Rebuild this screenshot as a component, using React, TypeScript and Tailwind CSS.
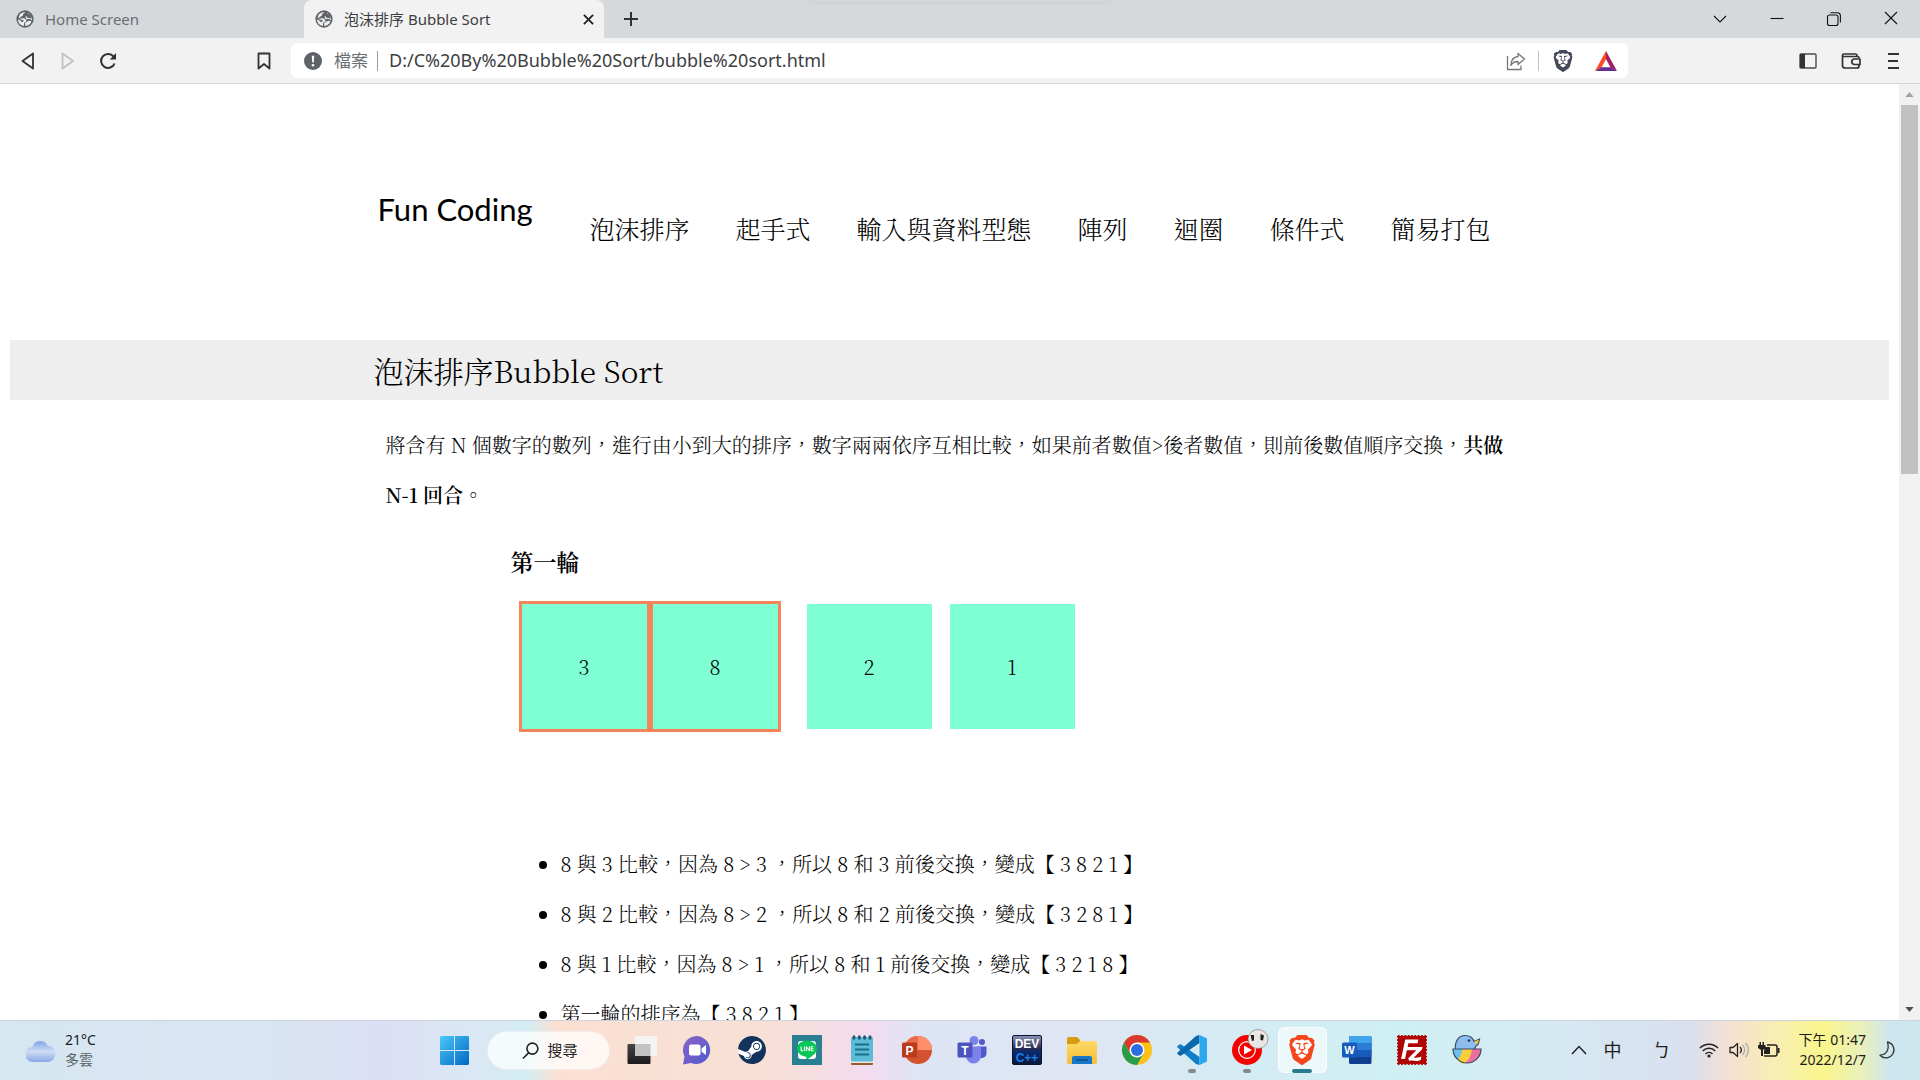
import type { ReactNode } from 'react';
import { SiBrave, SiFilezilla, SiLine, SiSteam } from 'react-icons/si';

const SERIF = "font-['Noto_Serif_CJK_TC','Noto_Sans_CJK_TC',serif]";
const SANS = "font-['Noto_Sans','Noto_Sans_CJK_TC',sans-serif]";

const navItems = ['泡沫排序', '起手式', '輸入與資料型態', '陣列', '迴圈', '條件式', '簡易打包'];

const steps = [
  '8 與 3 比較，因為 8 > 3 ，所以 8 和 3 前後交換，變成【 3 8 2 1 】',
  '8 與 2 比較，因為 8 > 2 ，所以 8 和 2 前後交換，變成【 3 2 8 1 】',
  '8 與 1 比較，因為 8 > 1 ，所以 8 和 1 前後交換，變成【 3 2 1 8 】',
  '第一輪的排序為【 3 8 2 1 】',
];

function Globe() {
  return (
    <svg viewBox="0 0 20 20" className="size-[18px] shrink-0" aria-hidden="true">
      <circle cx="10" cy="10" r="9.6" fill="#5f6368" />
      <path
        d="M10.600 2.200A8 8 0 0 0 4 5L3 8.500 5.500 9.500 9 9.200 11.600 11.200 11.200 13.400 9 14 8.800 17.900A8 8 0 0 1 2.200 10.400L4.500 11.500 6.500 13.500 8.500 12.500 8.200 11 5 10.500 4.500 8 7.500 6.500 8 4.500Z"
        fill="#eceef0"
      />
      <path d="M13.500 3 17.800 8.500 17.800 11.500 14.500 9.800 11.500 10.200 10.500 7.500 12.500 6Z" fill="#eceef0" />
      <path d="M10 14.500 14.500 12 17.200 12.500A8 8 0 0 1 10.500 17.800Z" fill="#eceef0" />
      <path d="M13 3.500A7.500 7.500 0 0 1 17.500 10L14.500 8.500 12.500 8.500 11.800 7Z" fill="#5f6368" />
    </svg>
  );
}

function TabStrip() {
  return (
    <div className="relative flex h-[38px] shrink-0 bg-[#d5d9dc]">
      <div className="absolute left-[810px] top-0 h-px w-[300px] shadow-[0_0_6px_1px_rgba(0,0,0,0.06)]" />
      <div className="flex w-[304px] items-center gap-[11px] pl-4 text-[15px] text-[#6a6e72]">
        <Globe />
        <span>Home Screen</span>
      </div>
      <div className="flex w-[300px] items-center rounded-t-lg bg-[#f2f2f2] pl-[11px] pr-2 text-[15px] text-[#3c4043]">
        <Globe />
        <span className="ml-[11px] flex-1 whitespace-nowrap">泡沫排序 Bubble Sort</span>
        <button aria-label="Close tab" className="grid size-4 place-items-center">
          <svg viewBox="0 0 12 12" className="size-[11px]" stroke="#202124" strokeWidth="2">
            <path d="M1 1 11 11M11 1 1 11" />
          </svg>
        </button>
      </div>
      <button aria-label="New tab" className="grid w-[54px] place-items-center">
        <svg viewBox="0 0 16 16" className="size-4" stroke="#303236" strokeWidth="2">
          <path d="M8 1V15M1 8H15" />
        </svg>
      </button>
      <div className="ml-auto flex pr-px">
        <WindowButton label="Search tabs">
          <path d="M2 5 8 11 14 5" />
        </WindowButton>
        <WindowButton label="Minimize">
          <path d="M1.500 7.500H14.500" />
        </WindowButton>
        <WindowButton label="Restore">
          <rect x="1.500" y="4" width="10.500" height="10.500" rx="2" />
          <path d="M4.500 1.700H11.500A3 3 0 0 1 14.400 4.700V11.500" />
        </WindowButton>
        <WindowButton label="Close">
          <path d="M2 1 14 13M14 1 2 13" />
        </WindowButton>
      </div>
    </div>
  );
}

function WindowButton({ label, children }: { label: string; children: ReactNode }) {
  return (
    <button aria-label={label} className="grid w-[57px] place-items-center">
      <svg viewBox="0 0 16 16" className="size-4" fill="none" stroke="#111" strokeWidth="1.100">
        {children}
      </svg>
    </button>
  );
}

function Toolbar() {
  return (
    <div className="flex h-[46px] shrink-0 items-center border-b border-[#d4d6d8] bg-[#f2f2f2]">
      <div className="flex w-[291px] items-center pl-5 pr-5">
        <button aria-label="Back">
          <svg viewBox="0 0 16 18" className="h-[18px] w-4" fill="none" stroke="#303236" strokeWidth="1.800" strokeLinejoin="round">
            <path d="M13 1.500V16.500L2.500 9Z" />
          </svg>
        </button>
        <button aria-label="Forward" className="ml-6">
          <svg viewBox="0 0 16 18" className="h-[18px] w-4" fill="none" stroke="#bfc1c4" strokeWidth="1.800" strokeLinejoin="round">
            <path d="M2.500 1.500V16.500L13 9Z" />
          </svg>
        </button>
        <button aria-label="Reload" className="ml-[23px]">
          <svg viewBox="0 0 18 18" className="size-[18px]" fill="none" stroke="#303236" strokeWidth="2">
            <path d="M15.600 11.500A7 7 0 1 1 14.600 4.600" />
            <path d="M17 1V7.500H10.800Z" fill="#303236" stroke="none" />
          </svg>
        </button>
        <button aria-label="Bookmark this page" className="ml-auto">
          <svg viewBox="0 0 14 18" className="h-[18px] w-[14px]" fill="none" stroke="#303236" strokeWidth="1.800" strokeLinejoin="round">
            <path d="M1.500 1.500H12.500V16.500L7 12 1.500 16.500Z" />
          </svg>
        </button>
      </div>
      <div className="flex h-[35px] flex-1 items-center rounded-md bg-white pl-[13px] pr-[11px] text-[18px]">
        <svg viewBox="0 0 18 18" className="size-[18px]" aria-hidden="true">
          <circle cx="9" cy="9" r="9" fill="#5f6368" />
          <path d="M7.800 3.800H10.200L9.800 10.500H8.200Z" fill="#fff" />
          <circle cx="9" cy="13.300" r="1.300" fill="#fff" />
        </svg>
        <label htmlFor="address" className="ml-3 text-[17px] text-[#6a6e72]">
          檔案
        </label>
        <div className="ml-[9px] h-5 w-px bg-[#9a9da0]" />
        <input
          id="address"
          type="text"
          defaultValue="D:/C%20By%20Bubble%20Sort/bubble%20sort.html"
          className="ml-[11px] min-w-0 flex-1 bg-transparent text-[#3c4043] outline-none"
        />
        <button aria-label="Share">
          <svg viewBox="0 0 20 20" className="size-5" fill="none" stroke="#74777b" strokeWidth="1.300" strokeLinejoin="round">
            <path d="M1.500 5V18.500H15V14.500" />
            <path d="M12 2.500 18.500 8 12 13.500V10.500C8.500 10.500 6.500 11.500 4.800 14.500 5 9 7.500 6 12 5.500Z" />
          </svg>
        </button>
        <div className="ml-3 h-5 w-px bg-[#bfc1c4]" />
        <button aria-label="Brave Shields" className="ml-[13px]">
          <SiBrave size={22} className="text-[#45475a]" />
        </button>
        <button aria-label="Brave Rewards" className="ml-[21px]">
          <svg viewBox="0 0 22 20" className="h-5 w-[22px]">
            <path d="M11 0 0 20 6.500 16.500 11 8Z" fill="#ff4724" />
            <path d="M11 0 22 20 15.500 16.500 11 8Z" fill="#9e1f63" />
            <path d="M0 20H22L15.500 16.200H6.500Z" fill="#662d91" />
          </svg>
        </button>
      </div>
      <div className="flex w-[292px] items-center justify-end pr-[21px]">
        <button aria-label="Sidebar">
          <svg viewBox="0 0 18 16" className="h-4 w-[18px]">
            <rect x="1" y="1" width="16" height="14" rx="1" fill="none" stroke="#4a4c50" strokeWidth="1.400" />
            <path d="M1 1H6V15H1Z" fill="#303236" />
          </svg>
        </button>
        <button aria-label="Wallet" className="ml-6">
          <svg viewBox="0 0 20 16" className="h-4 w-5" fill="none" stroke="#303236" strokeWidth="1.700" strokeLinejoin="round">
            <path d="M18 5V4.500A2 2 0 0 0 16.500 3.500H1.500V12.500A2.500 2.500 0 0 0 4 15H16A2 2 0 0 0 18 13V12M1.500 3.500V2.500A1.500 1.500 0 0 1 3 1H14.500A1.500 1.500 0 0 1 16 2.500V3.500" />
            <path d="M19 6H13.500A2.500 2.500 0 0 0 13.500 11.500H19Z" />
          </svg>
        </button>
        <button aria-label="Menu" className="ml-[26px]">
          <svg viewBox="0 0 12 16" className="h-4 w-3" stroke="#303236" strokeWidth="1.800">
            <path d="M1 1H12M1 8H11M1 15H12" />
          </svg>
        </button>
      </div>
    </div>
  );
}

function Box({ value, active = false }: { value: number; active?: boolean }) {
  return (
    <div
      className={
        active
          ? 'grid size-[131px] place-items-center border-[3px] border-[#f4845a] bg-[#7fffd4]'
          : 'grid size-[125px] place-items-center bg-[#7fffd4]'
      }
    >
      {value}
    </div>
  );
}

function Page() {
  return (
    <main lang="zh-Hant" className={`min-w-0 flex-1 overflow-hidden px-[10px] text-xl font-light tabular-nums text-black ${SERIF}`}>
      <header className="mx-auto flex h-64 max-w-[1152px] items-start gap-14 pl-1 pt-[98px]">
        <a href="#home" className="mt-[7px] w-[156px] whitespace-nowrap font-['Lato',sans-serif] text-[31px] font-normal leading-10">
          Fun Coding
        </a>
        <nav className="mt-[28px] flex gap-[46px] whitespace-nowrap text-[25px] leading-9">
          {navItems.map((item) => (
            <a key={item} href={`#${item}`}>
              {item}
            </a>
          ))}
        </nav>
      </header>
      <div className="bg-[#eee]">
        <h1 className="mx-auto max-w-[1152px] text-[30px] leading-[60px]">泡沫排序Bubble Sort</h1>
      </div>
      <section className="mx-auto max-w-[1152px] px-3 pt-5">
        <p className="leading-[50px]">
          將含有 N 個數字的數列，進行由小到大的排序，數字兩兩依序互相比較，如果前者數值&gt;後者數值，則前後數值順序交換，
          <b className="font-semibold">共做 N-1 回合</b>。
        </p>
        <div className="pl-[125px] pt-6">
          <h2 className="text-[23px] font-semibold leading-9">第一輪</h2>
          <div className="ml-2 mt-[21px] flex items-center">
            <Box value={3} active />
            <Box value={8} active />
            <div className="ml-[26px] flex gap-[18px]">
              <Box value={2} />
              <Box value={1} />
            </div>
          </div>
          <ul className="mt-[107px] list-disc pl-[50px] leading-[50px]">
            {steps.map((step) => (
              <li key={step}>{step}</li>
            ))}
          </ul>
        </div>
      </section>
    </main>
  );
}

function Scrollbar() {
  return (
    <div className="flex w-[21px] shrink-0 flex-col items-center bg-[#f1f1f1]">
      <button aria-label="Scroll up" className="grid h-[21px] place-items-center">
        <svg viewBox="0 0 10 6" className="h-[5px] w-[9px]" fill="#a3a3a3">
          <path d="M0 6 5 0 10 6Z" />
        </svg>
      </button>
      <div className="h-[369px] w-[17px] bg-[#c1c1c1]" />
      <button aria-label="Scroll down" className="mt-auto grid h-[21px] place-items-center">
        <svg viewBox="0 0 10 6" className="h-[5px] w-[9px]" fill="#505050">
          <path d="M0 0 5 6 10 0Z" />
        </svg>
      </button>
    </div>
  );
}

function TaskButton({ label, children, state }: { label: string; children: ReactNode; state?: 'running' | 'active' }) {
  return (
    <button aria-label={label} className="relative grid h-full w-[55px] place-items-center">
      {state === 'active' && <span className="absolute inset-x-[3px] inset-y-[6px] rounded-md border border-white/70 bg-white/60" />}
      <svg viewBox="0 0 30 30" className="relative size-[30px] overflow-visible font-['Liberation_Sans',sans-serif]">
        {children}
      </svg>
      {state === 'running' && <span className="absolute bottom-[6px] h-1 w-2 rounded-full bg-[#85898d]" />}
      {state === 'active' && <span className="absolute bottom-[6px] h-1 w-5 rounded-full bg-[#2a7d8c]" />}
    </button>
  );
}

function TaskIcons() {
  return (
    <>
      <TaskButton label="Task View">
        <defs>
          <linearGradient id="tvDark" x1="0" y1="0" x2="0" y2="1">
            <stop stopColor="#444" />
            <stop offset="1" stopColor="#1c1c1c" />
          </linearGradient>
        </defs>
        <rect x="0.500" y="9" width="23" height="20" rx="1" fill="url(#tvDark)" />
        <rect x="8" y="1" width="22" height="20" rx="1" fill="#f4f4f4" />
        <rect x="8" y="9" width="15.500" height="12" fill="#c2c2c0" />
      </TaskButton>
      <TaskButton label="Chat">
        <defs>
          <linearGradient id="chat" x1="0" y1="0" x2="1" y2="1">
            <stop stopColor="#8a63c8" />
            <stop offset="1" stopColor="#4f5bd0" />
          </linearGradient>
        </defs>
        <path d="M15 1A14 14 0 1 1 9 28L1 29.500 2.500 21.500A14 14 0 0 1 15 1Z" fill="url(#chat)" />
        <rect x="7" y="9.500" width="11.500" height="11" rx="2" fill="#fff" />
        <path d="M19.500 13.500 24 10V20L19.500 16.800Z" fill="#fff" />
      </TaskButton>
      <TaskButton label="Steam">
        <circle cx="15" cy="15" r="13.600" fill="#fff" />
        <SiSteam x={1} y={1} size={28} color="#12335c" />
      </TaskButton>
      <TaskButton label="LINE">
        <rect width="30" height="30" fill="#2a7f93" />
        <rect x="6" y="6" width="18" height="18" rx="3" fill="#fff" />
        <SiLine x={5} y={5} size={20} color="#06c755" />
      </TaskButton>
      <TaskButton label="Notepad">
        <rect x="4" y="26" width="22" height="4" rx="1" fill="#9a5b2c" />
        <rect x="4" y="25" width="22" height="3" fill="#e8e8e8" />
        <rect x="4" y="2" width="22" height="24.500" rx="1.500" fill="#5bbcd8" />
        <g fill="#1d5a70">
          <ellipse cx="7" cy="2.500" rx="1.500" ry="2.300" />
          <ellipse cx="12.300" cy="2.500" rx="1.500" ry="2.300" />
          <ellipse cx="17.600" cy="2.500" rx="1.500" ry="2.300" />
          <ellipse cx="23" cy="2.500" rx="1.500" ry="2.300" />
        </g>
        <path d="M8 9.500H22M8 14.500H22M8 19.500H22" stroke="#1c6f8c" strokeWidth="1.800" />
      </TaskButton>
      <TaskButton label="PowerPoint">
        <circle cx="16" cy="15" r="14" fill="#d35230" />
        <path d="M16 1V15H30A14 14 0 0 0 16 1Z" fill="#ff8f6b" />
        <path d="M16 1A14 14 0 0 0 2 15H16Z" fill="#ed6c47" />
        <rect x="0" y="7.500" width="15" height="15" rx="1.500" fill="#b93a1c" />
        <text x="7.500" y="19.500" textAnchor="middle" fontSize="12" fontWeight="700" fill="#fff">P</text>
      </TaskButton>
      <TaskButton label="Teams">
        <circle cx="17" cy="5.500" r="4.500" fill="#7b83eb" />
        <circle cx="25" cy="7" r="3" fill="#5059c9" />
        <path d="M20 11.500H29.500V19A5 5 0 0 1 20 20Z" fill="#5059c9" />
        <path d="M9 11.500H24V21A7.500 7.500 0 0 1 9 21Z" fill="#7b83eb" />
        <rect x="0.500" y="7.500" width="15" height="15" rx="1.500" fill="#4b53bc" />
        <text x="8" y="19.500" textAnchor="middle" fontSize="12" fontWeight="700" fill="#fff">T</text>
      </TaskButton>
      <TaskButton label="Dev-C++">
        <defs>
          <linearGradient id="dev" x1="0" y1="0" x2="0" y2="1">
            <stop stopColor="#8d93ba" />
            <stop offset="0.450" stopColor="#262a50" />
            <stop offset="0.550" stopColor="#0b2a70" />
            <stop offset="1" stopColor="#0b1838" />
          </linearGradient>
        </defs>
        <rect x="0.500" y="0.500" width="29" height="29" rx="1.500" fill="url(#dev)" stroke="#0b1530" />
        <text x="15" y="13" textAnchor="middle" fontSize="12" fontWeight="700" fill="#fff">DEV</text>
        <text x="15" y="27" textAnchor="middle" fontSize="12" fontWeight="700" fill="#1583f0">C++</text>
      </TaskButton>
      <TaskButton label="File Explorer">
        <defs>
          <linearGradient id="folder" x1="0" y1="0" x2="0" y2="1">
            <stop stopColor="#ffdb66" />
            <stop offset="1" stopColor="#f5bd35" />
          </linearGradient>
        </defs>
        <path d="M0 4A2 2 0 0 1 2 2H10L13 5V11H0Z" fill="#d89b12" />
        <path d="M0 9H10L13 6H28A2 2 0 0 1 30 8V27A2 2 0 0 1 28 29H2A2 2 0 0 1 0 27Z" fill="url(#folder)" />
        <path d="M5 29V23A2 2 0 0 1 7 21H23A2 2 0 0 1 25 23V29Z" fill="#1878c8" />
        <rect x="9" y="24" width="12" height="1.800" rx="0.900" fill="#10508c" />
      </TaskButton>
      <TaskButton label="Chrome">
        <circle cx="15" cy="15" r="15" fill="#fbc117" />
        <path d="M2 7.500A15 15 0 0 1 28 7.500H15L8.500 18.700Z" fill="#d93a2f" />
        <path d="M2 7.500A15 15 0 0 0 15 30L21.500 18.800 8.500 18.800Z" fill="#2a9b4a" />
        <circle cx="15" cy="15" r="7.500" fill="#fff" />
        <circle cx="15" cy="15" r="6" fill="#2b6de0" />
      </TaskButton>
      <TaskButton label="Visual Studio Code" state="running">
        <path d="M3.500 9 1 10.500C0 11.200 0 12 0.800 12.700L19 29 22.500 30V22Z" fill="#0e7fc6" />
        <path d="M3.500 21 1 19.500C0 18.800 0 18 0.800 17.300L19 1 22.500 0V8Z" fill="#0a68ad" />
        <path d="M22.500 0 29 3A1.500 1.500 0 0 1 30 4.500V25.500A1.500 1.500 0 0 1 29 27L22.500 30Z" fill="#2ca8ee" />
      </TaskButton>
      <TaskButton label="YouTube Music" state="running">
        <circle cx="15" cy="15" r="15" fill="#f60000" />
        <circle cx="15" cy="15" r="8.300" fill="none" stroke="#fff" strokeWidth="1.200" />
        <path d="M12 10.500 20 15 12 19.500Z" fill="#fff" />
        <ellipse cx="26" cy="4" rx="10" ry="9.500" fill="#e9e7e3" stroke="#77726c" strokeWidth="0.600" />
        <path d="M18.500 0H22V5.500L20 6ZM28.500 -1 32 0.500 31 5.500 28.500 5Z" fill="#222" />
      </TaskButton>
      <TaskButton label="Brave" state="active">
        <path d="M8 4 11 2H19L22 4 25 8 22.500 20 15 27 7.500 20 5 8Z" fill="#fff" />
        <SiBrave x={0} y={0} size={30} color="#f4471c" />
      </TaskButton>
      <TaskButton label="Word">
        <rect x="7" y="1" width="22.500" height="28" rx="1.500" fill="#103f91" />
        <path d="M7 8H29.500V15H7Z" fill="#2b7cd3" />
        <path d="M7 15H29.500V22H7Z" fill="#185abd" />
        <path d="M8.500 1H28A1.500 1.500 0 0 1 29.500 2.500V8H7V2.500A1.500 1.500 0 0 1 8.500 1Z" fill="#41a5ee" />
        <rect x="0" y="7.500" width="15" height="15" rx="1.500" fill="#185abd" />
        <text x="7.500" y="19" textAnchor="middle" fontSize="11" fontWeight="700" fill="#fff">W</text>
      </TaskButton>
      <TaskButton label="FileZilla">
        <rect x="2" y="2" width="26" height="26" fill="#fff" />
        <SiFilezilla x={0} y={0} size={30} color="#b00505" />
      </TaskButton>
      <TaskButton label="Paint">
        <path d="M3.500 14.500C2.500 6 7 0.500 13 0.500C18 0.500 21 3 22 6.500L27.500 4 26 9.500Q23 11 22.500 14.500Z" fill="#8dbdf0" stroke="#3b4a66" strokeWidth="1.200" />
        <path d="M22.500 6.500 27 4.500 25.500 9Q23.500 9 22.500 6.500Z" fill="#f6c631" />
        <path d="M1 14H29A14 14 0 0 1 1 14Z" fill="#ee6f9d" />
        <path d="M1 14H10Q10 21 5 24.500A14 14 0 0 1 1 14Z" fill="#69c2ee" />
        <path d="M10 14H20Q19 25 11 29A14 14 0 0 1 5 24.500Q10 21 10 14Z" fill="#f8cf3a" />
        <path d="M1 14H29A14 14 0 0 1 1 14Z" fill="none" stroke="#3b4a66" strokeWidth="1.200" />
        <circle cx="17" cy="5.500" r="1.300" fill="#26324a" />
      </TaskButton>
    </>
  );
}

function Taskbar() {
  return (
    <footer
      className={`flex h-[60px] shrink-0 border-t border-[#ccd5dd] bg-[linear-gradient(90deg,#d6e7f1_0%,#d9e5f3_14%,#dcdff5_20%,#dae8f4_25%,#d3edf3_27.5%,#fbe0d2_29%,#f8e0d6_40%,#f4dbee_45%,#dde5f4_48%,#dfe5f3_56%,#d6eaf4_62%,#cff0f2_73%,#d5e9f3_81%,#d9e0ef_88%,#f5e0d2_90%,#f8eeb4_92.5%,#faf68c_95%,#e9f0bc_97%,#cde6ef_98.5%,#cfe8f0_100%)] ${SANS}`}
    >
      <div className="flex flex-1 items-center gap-[9px] pb-px pl-[26px] text-[14px] leading-5 text-[#1c1c1c]">
        <svg viewBox="0 0 30 24" className="h-6 w-[30px]" aria-hidden="true">
          <defs>
            <linearGradient id="cloud" x1="0" y1="0" x2="0" y2="1">
              <stop stopColor="#7fa5e8" />
              <stop offset="0.500" stopColor="#cfdcf6" />
              <stop offset="1" stopColor="#88a9e6" />
            </linearGradient>
          </defs>
          <path d="M7 24A7 7 0 0 1 6.500 9 8 8 0 0 1 21.500 7.500 8.300 8.300 0 0 1 22.500 24Z" fill="url(#cloud)" />
        </svg>
        <div>
          <div>21°C</div>
          <div className="text-[#5a5f66]">多雲</div>
        </div>
      </div>
      <div className="flex items-center pb-px pr-px">
        <button aria-label="Start" className="grid h-full w-[55px] place-items-center">
          <svg viewBox="0 0 30 30" className="size-[29px]">
            <defs>
              <linearGradient id="win" gradientUnits="userSpaceOnUse" x1="0" y1="0" x2="30" y2="30">
                <stop stopColor="#4cc8fa" />
                <stop offset="1" stopColor="#0067c4" />
              </linearGradient>
            </defs>
            <path d="M1 0H14.500V14.500H0V1ZM15.500 0H29L30 1V14.500H15.500ZM0 15.500H14.500V30H1L0 29ZM15.500 15.500H30V29L29 30H15.500Z" fill="url(#win)" />
          </svg>
        </button>
        <button className="mx-[5px] flex h-[39px] w-[123px] items-center justify-center gap-2 rounded-full border border-black/5 bg-white/75 pl-1 text-[15px] text-[#222]">
          <svg viewBox="0 0 18 18" className="size-[17px]" fill="none" stroke="#222" strokeWidth="1.700" strokeLinecap="round">
            <circle cx="11" cy="7" r="5.800" />
            <path d="M7 11.500 1.500 17" />
          </svg>
          搜尋
        </button>
        <TaskIcons />
      </div>
      <div className="flex flex-1 items-center justify-end pb-px pr-6 text-[#1c1c1c]">
        <button aria-label="Show hidden icons">
          <svg viewBox="0 0 16 10" className="h-[10px] w-4" fill="none" stroke="#222" strokeWidth="1.500">
            <path d="M1 9 8 1.500 15 9" />
          </svg>
        </button>
        <button className="ml-[17px] text-lg leading-6">中</button>
        <button className="ml-[31px] text-lg leading-6">ㄅ</button>
        <svg viewBox="0 0 20 16" className="ml-[28px] h-4 w-5" fill="none" stroke="#222" strokeWidth="1.500" aria-hidden="true">
          <path d="M1 6A12.500 12.500 0 0 1 19 6M3.800 9A8.600 8.600 0 0 1 16.200 9M6.500 12A5 5 0 0 1 13.500 12" />
          <circle cx="10" cy="14" r="1.600" fill="#222" stroke="none" />
        </svg>
        <svg viewBox="0 0 21 16" className="ml-[10px] h-4 w-[21px]" fill="none" stroke="#222" strokeWidth="1.300" aria-hidden="true">
          <path d="M1 5.500H4L8.500 1.500V14.500L4 10.500H1ZM11 5A4.500 4.500 0 0 1 11 11" strokeLinejoin="round" />
          <path d="M13.500 3A7 7 0 0 1 13.500 13M16.500 1A10 10 0 0 1 16.500 15" stroke="#aaa" />
        </svg>
        <svg viewBox="0 0 22 16" className="ml-2 h-4 w-[22px]" aria-hidden="true">
          <path d="M9 3H17A2 2 0 0 1 19 5V12A2 2 0 0 1 17 14H6" fill="none" stroke="#222" strokeWidth="1.500" />
          <path d="M7 5H12V12H6V9ZM0 3H1.500V0H3V3H4.500V0H6V3H7.500V6L5 8V14H3V8L0 6ZM19.500 6H21.500V11H19.500Z" fill="#222" />
        </svg>
        <div className="ml-[19px] text-right text-[14px] leading-5">
          <div>下午 01:47</div>
          <div>2022/12/7</div>
        </div>
        <svg viewBox="0 0 17 18" className="ml-[13px] h-[18px] w-[17px]" fill="none" stroke="#333" strokeWidth="1.300" strokeLinejoin="round" aria-hidden="true">
          <path d="M8.500 1A8 8 0 1 1 1 14.200C8 13.500 10.500 8 8.500 1Z" />
        </svg>
      </div>
    </footer>
  );
}

export default function App() {
  return (
    <div className={`flex h-screen flex-col overflow-hidden bg-white ${SANS}`}>
      <TabStrip />
      <Toolbar />
      <div className="flex min-h-0 flex-1">
        <Page />
        <Scrollbar />
      </div>
      <Taskbar />
    </div>
  );
}
